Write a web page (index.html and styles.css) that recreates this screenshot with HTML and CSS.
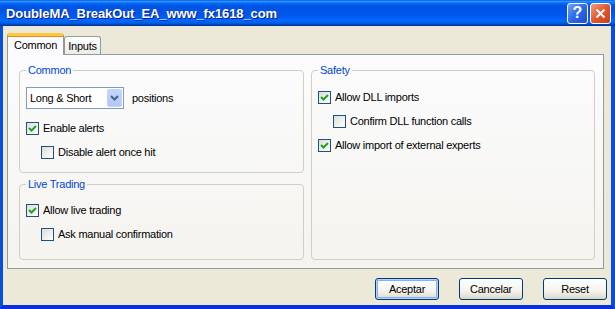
FILE: index.html
```html
<!DOCTYPE html>
<html lang="es">
<head>
    <meta charset="UTF-8">
    <meta name="viewport" content="width=device-width, initial-scale=1.0">
    <title>DoubleMA_BreakOut_EA_www_fx1618_com</title>
    <link rel="stylesheet" href="styles.css">
</head>
<body>
    <div class="window">
        <div class="titlebar">
            <span class="title">DoubleMA_BreakOut_EA_www_fx1618_com</span>
            <div class="caption-buttons">
                <span class="cap-btn help">?</span>
                <span class="cap-btn close">
                    <svg width="11" height="11" viewBox="0 0 11 11"><path d="M1.5 1.5 L9.5 9.5 M9.5 1.5 L1.5 9.5" stroke="#fff" stroke-width="2" fill="none"/></svg>
                </span>
            </div>
        </div>

        <div class="client">
            <div class="tabs">
                <span class="tab active">Common</span>
                <span class="tab">Inputs</span>
            </div>

            <div class="panel">
                <div class="col">
                    <fieldset class="group group-common">
                        <legend>Common</legend>
                        <div class="select-row">
                            <div class="select">
                                <span>Long &amp; Short</span>
                                <span class="drop">
                                    <svg width="9" height="6" viewBox="0 0 9 6"><path d="M1 1 L4.5 4.5 L8 1" stroke="#4d6185" stroke-width="2" fill="none"/></svg>
                                </span>
                            </div>
                            <span>positions</span>
                        </div>
                        <div class="check"><span class="box on"><svg width="11" height="11" viewBox="0 0 11 11"><path d="M2 5 L4.5 7.5 L9 3" stroke="#21a121" stroke-width="2" fill="none"/></svg></span>Enable alerts</div>
                        <div class="check sub"><span class="box"></span>Disable alert once hit</div>
                    </fieldset>

                    <fieldset class="group group-live">
                        <legend>Live Trading</legend>
                        <div class="check"><span class="box on"><svg width="11" height="11" viewBox="0 0 11 11"><path d="M2 5 L4.5 7.5 L9 3" stroke="#21a121" stroke-width="2" fill="none"/></svg></span>Allow live trading</div>
                        <div class="check sub"><span class="box"></span>Ask manual confirmation</div>
                    </fieldset>
                </div>

                <fieldset class="group group-safety">
                    <legend>Safety</legend>
                    <div class="check"><span class="box on"><svg width="11" height="11" viewBox="0 0 11 11"><path d="M2 5 L4.5 7.5 L9 3" stroke="#21a121" stroke-width="2" fill="none"/></svg></span>Allow DLL imports</div>
                    <div class="check sub"><span class="box"></span>Confirm DLL function calls</div>
                    <div class="check"><span class="box on"><svg width="11" height="11" viewBox="0 0 11 11"><path d="M2 5 L4.5 7.5 L9 3" stroke="#21a121" stroke-width="2" fill="none"/></svg></span>Allow import of external experts</div>
                </fieldset>
            </div>

            <div class="buttons">
                <button class="default">Aceptar</button>
                <button>Cancelar</button>
                <button>Reset</button>
            </div>
        </div>
    </div>
</body>
</html>
```

FILE: styles.css
```css
body {
    margin: 0;
    font-family: 'Liberation Sans', Arial, sans-serif;
    font-size: 11px;
    letter-spacing: -0.25px;
    color: #000;
    background-color: #ece9d8;
}
.window {
    width: 615px;
    height: 309px;
    display: flex;
    flex-direction: column;
}
.titlebar {
    height: 26px;
    display: flex;
    align-items: center;
    justify-content: space-between;
    padding: 0 4px 0 6px;
    background: linear-gradient(180deg, #0058ee 0%, #3593ff 5%, #127dff 9%, #0262ee 15%, #0054e3 25%, #0055eb 56%, #005bf5 66%, #026afe 76%, #0062ef 86%, #0052d6 92%, #0040ab 96%, #003092 100%);
}
.title {
    color: #fff;
    font-size: 13px;
    font-weight: bold;
    letter-spacing: -0.1px;
    text-shadow: 1px 1px 0 #0a1883;
}
.caption-buttons {
    display: flex;
    gap: 2px;
}
.cap-btn {
    width: 19px;
    height: 19px;
    border: 1px solid #fff;
    border-radius: 3px;
    display: flex;
    align-items: center;
    justify-content: center;
}
.help {
    background: linear-gradient(135deg, #72a2f6 0%, #2b6ae8 50%, #1a4fd0 100%);
    color: #fff;
    font-size: 16px;
    font-weight: bold;
    letter-spacing: 0;
}
.close {
    background: linear-gradient(135deg, #f09c80 0%, #e2582c 50%, #c9401b 100%);
}
.client {
    flex: 1;
    border-left: 3px solid #0a4fd9;
    border-right: 4px solid #0a4fd9;
    border-bottom: 4px solid #0831d9;
    padding: 7px 0 0 4px;
    display: flex;
    flex-direction: column;
}
.tabs {
    display: flex;
    align-items: flex-end;
    height: 21px;
}
.tab {
    width: 37px;
    height: 18px;
    box-sizing: border-box;
    border: 1px solid #919b9c;
    border-bottom: none;
    border-radius: 3px 3px 0 0;
    background: linear-gradient(180deg, #fff, #ecebe6);
    display: flex;
    align-items: center;
    justify-content: center;
}
.tab.active {
    width: 57px;
    height: 22px;
    margin-bottom: -1px;
    position: relative;
    z-index: 1;
    background: #fcfcfe;
    border-top: 3px solid #ffc83c;
    box-shadow: inset 0 1px 0 #e68b2c;
    padding-bottom: 1px;
}
.panel {
    width: 597px;
    height: 215px;
    box-sizing: border-box;
    border: 1px solid #919b9c;
    background: linear-gradient(180deg, #fcfcfe, #f4f3ee);
    padding: 9px 0 8px 11px;
    display: grid;
    grid-template-columns: 285px 284px;
    column-gap: 7px;
}
.col {
    display: flex;
    flex-direction: column;
    gap: 5px;
}
.group {
    margin: 0;
    min-width: 0;
    border: 1px solid #d0d0bf;
    border-radius: 4px;
    padding: 8px 6px 8px 6px;
}
.group legend {
    color: #0046d5;
    line-height: 13px;
    padding: 0 2px;
}
.group-common {
    padding-top: 10px;
}
.group-live {
    flex: 1;
    padding-top: 7px;
}
.select-row {
    display: flex;
    align-items: center;
    gap: 8px;
    margin-bottom: 7px;
}
.select {
    width: 98px;
    height: 22px;
    box-sizing: border-box;
    border: 1px solid #7f9db9;
    background: #fff;
    display: flex;
    align-items: center;
    justify-content: space-between;
    padding: 1px 1px 1px 3px;
}
.drop {
    width: 15px;
    height: 18px;
    box-sizing: border-box;
    border: 1px solid #c3d3fd;
    border-radius: 2px;
    background: linear-gradient(180deg, #c4d5fc, #b2c6f6);
    display: flex;
    align-items: center;
    justify-content: center;
}
.check {
    height: 24px;
    display: flex;
    align-items: center;
}
.check.sub {
    padding-left: 15px;
}
.box {
    width: 13px;
    height: 13px;
    box-sizing: border-box;
    border: 1px solid #1c5180;
    background: linear-gradient(135deg, #dcdcd7, #fff);
    margin-right: 4px;
    display: flex;
    align-items: center;
    justify-content: center;
}
.buttons {
    display: flex;
    justify-content: flex-end;
    gap: 20px;
    margin-top: 9px;
    padding-right: 4px;
}
button {
    width: 64px;
    height: 22px;
    font-family: inherit;
    font-size: 11px;
    letter-spacing: -0.25px;
    color: #000;
    border: 1px solid #003c74;
    border-radius: 3px;
    background: linear-gradient(180deg, #fff 0%, #f4f3ee 60%, #e3e0d2 90%, #d6d0c5 100%);
    padding: 0;
}
button.default {
    box-shadow: inset 0 0 0 1px #b9d1fa, inset 0 0 0 2px #8aafee;
}
```
